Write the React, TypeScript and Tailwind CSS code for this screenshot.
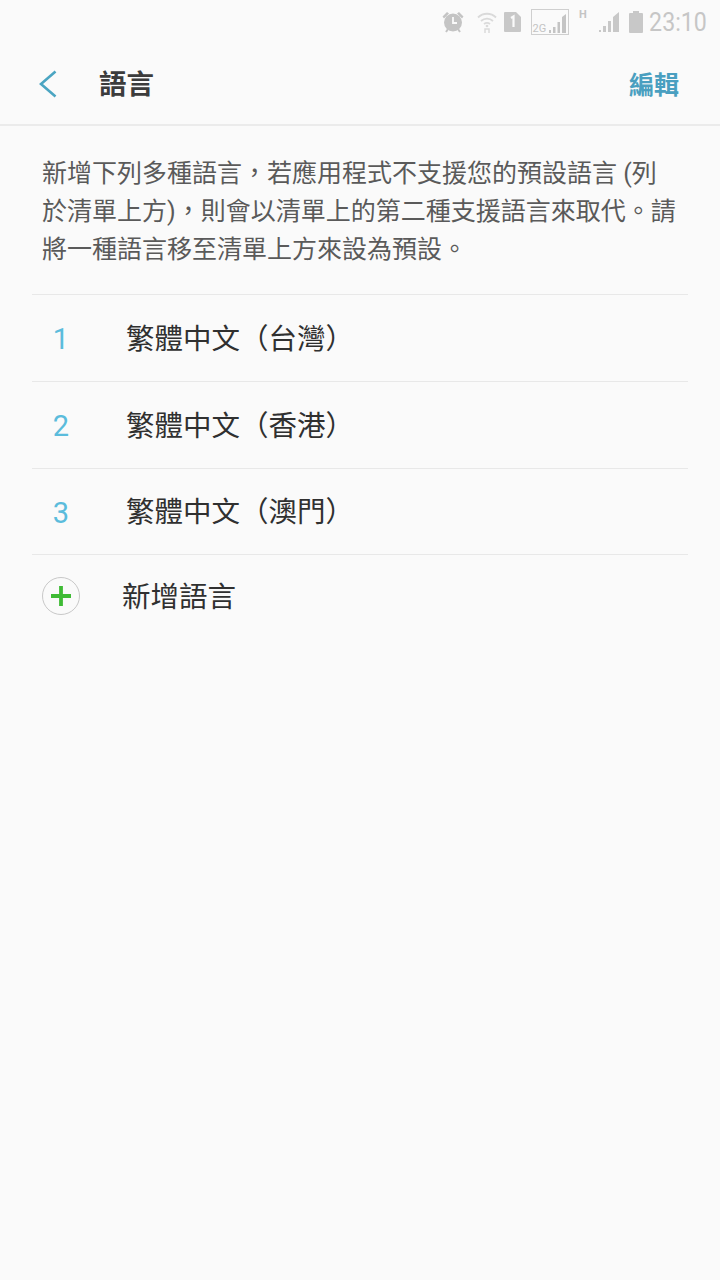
import React from "react";

const cjk = { fontFamily: '"Roboto","Noto Sans CJK TC",sans-serif' };

function StatusBar() {
  return (
    <div className="h-[44px] flex items-center justify-end pr-[13px] text-[#c4c4c4]">
      <svg width="24" height="24" viewBox="0 0 24 24" className="mr-[10px]" fill="#c4c4c4">
        <circle cx="11" cy="12.500" r="9" />
        <path d="M0.500 6.500 L5 2 L7 3.500 L2 8.500Z M21.500 6.500 L17 2 L15 3.500 L20 8.500Z" />
        <path d="M11 7v6h4" stroke="#fafafa" strokeWidth="1.800" fill="none" />
        <path d="M4 22l2-3M18 22l-2-3" stroke="#c4c4c4" strokeWidth="2" />
      </svg>
      <svg width="22" height="24" viewBox="0 0 22 24" className="mr-[5px]" fill="none" stroke="#dadada">
        <path d="M2 7.500C7 2.500 15 2.500 20 7.500" strokeWidth="1.800" />
        <path d="M5 11C8.500 7.800 13.500 7.800 17 11" strokeWidth="1.800" />
        <path d="M8 14c2-1.500 4-1.500 6 0" strokeWidth="1.800" />
        <circle cx="11" cy="16" r="1.300" fill="#dadada" stroke="none" />
        <path d="M9 23v-4h4v4" strokeWidth="1.500" />
      </svg>
      <svg width="19" height="22" viewBox="0 0 19 22" className="mr-[9px]">
        <path d="M2 1h11l5 5v14a1 1 0 0 1-1 1H2a1 1 0 0 1-1-1V2a1 1 0 0 1 1-1z" fill="#c8c8c8" />
        <path d="M8 7l2.500-1.500V16" stroke="#fafafa" strokeWidth="2.200" fill="none" />
      </svg>
      <svg width="38" height="26" viewBox="0 0 38 26" className="mr-[10px]" fill="#c4c4c4">
        <rect x="0.500" y="0.500" width="37" height="25" fill="none" stroke="#cfcfcf" />
        <text x="1.500" y="23" fontSize="11" fontFamily="Roboto, sans-serif" fill="#c4c4c4">2G</text>
        <path d="M18 24h2v-3h-2z M22 24h2.500v-6H22z M26.500 24H29v-11h-2.500z M31 24h4V5l-4 3z" />
      </svg>
      <div className="relative w-[20px] h-[26px]">
        <span className="absolute left-0 top-[-2px] text-[11px] font-bold" style={{ fontFamily: "Roboto, sans-serif" }}>H</span>
      </div>
      <svg width="21" height="22" viewBox="0 0 21 22" className="mr-[9px]" fill="#c8c8c8">
        <path d="M0 21h2v-2H0z M4 21h3v-6H4z M9 21h3V10H9z M14 21h6V1l-6 5z" />
      </svg>
      <svg width="14" height="22" viewBox="0 0 14 22" className="mr-[8px]" fill="#c8c8c8">
        <path d="M4 0h6v2h3a1 1 0 0 1 1 1v18a1 1 0 0 1-1 1H1a1 1 0 0 1-1-1V3a1 1 0 0 1 1-1h3z" />
      </svg>
      <div className="w-[56px] flex justify-end">
        <span className="text-[26px] leading-none text-[#c6c6c6] scale-x-[0.89] origin-right" style={{ fontFamily: "Roboto, sans-serif" }}>23:10</span>
      </div>
    </div>
  );
}

function Row({ n, label, h }: { n: string; label: string; h: string }) {
  return (
    <div className={`${h} border-t border-[#e8e8e8] flex items-center pt-[4px]`}>
      <span className="w-[58px] text-center text-[29px] text-[#5bbcdc]" style={{ fontFamily: "Roboto, sans-serif" }}>{n}</span>
      <span className="ml-[36px] text-[28.500px] leading-none text-[#303030] whitespace-nowrap">{label}</span>
    </div>
  );
}

export default function App() {
  return (
    <div className="w-[720px] h-[1280px] bg-[#fafafa] overflow-hidden" style={cjk}>
      <StatusBar />
      <header className="h-[82px] border-b-2 border-[#ebebeb] flex items-center pl-[39px] pr-[41px] pt-[2px]">
        <svg width="18" height="28" viewBox="0 0 18 28" fill="none" stroke="#4ba5c2" strokeWidth="2.600" className="mt-[-2px]">
          <path d="M16.500 1.500 L2 14 L16.500 26.500" />
        </svg>
        <h1 className="ml-[42px] text-[27.500px] font-bold text-[#3c3c3c] leading-none">語言</h1>
        <span className="ml-auto text-[25px] font-bold text-[#4a9fc0] leading-none">編輯</span>
      </header>
      <p className="px-[42px] pt-[29px] h-[168px] text-[25px] leading-[38px] text-[#5a5a5a]">
        新增下列多種語言，若應用程式不支援您的預設語言 (列於清單上方)，則會以清單上的第二種支援語言來取代。請將一種語言移至清單上方來設為預設。
      </p>
      <div className="mx-[32px]">
        <Row h="h-[87px]" n="1" label="繁體中文（台灣）" />
        <Row h="h-[87px]" n="2" label="繁體中文（香港）" />
        <Row h="h-[86px]" n="3" label="繁體中文（澳門）" />
        <div className="h-[85px] border-t border-[#e8e8e8] flex items-center pl-[10px]">
          <div className="w-[38px] h-[38px] mb-[2px] rounded-full border border-[#c8c8c8] flex items-center justify-center">
            <svg width="22" height="22" viewBox="0 0 22 22" stroke="#3fbb35" strokeWidth="3.800">
              <path d="M11 1v20M1 11h20" />
            </svg>
          </div>
          <span className="ml-[42px] pt-[2px] text-[28.500px] leading-none text-[#303030]">新增語言</span>
        </div>
      </div>
    </div>
  );
}
